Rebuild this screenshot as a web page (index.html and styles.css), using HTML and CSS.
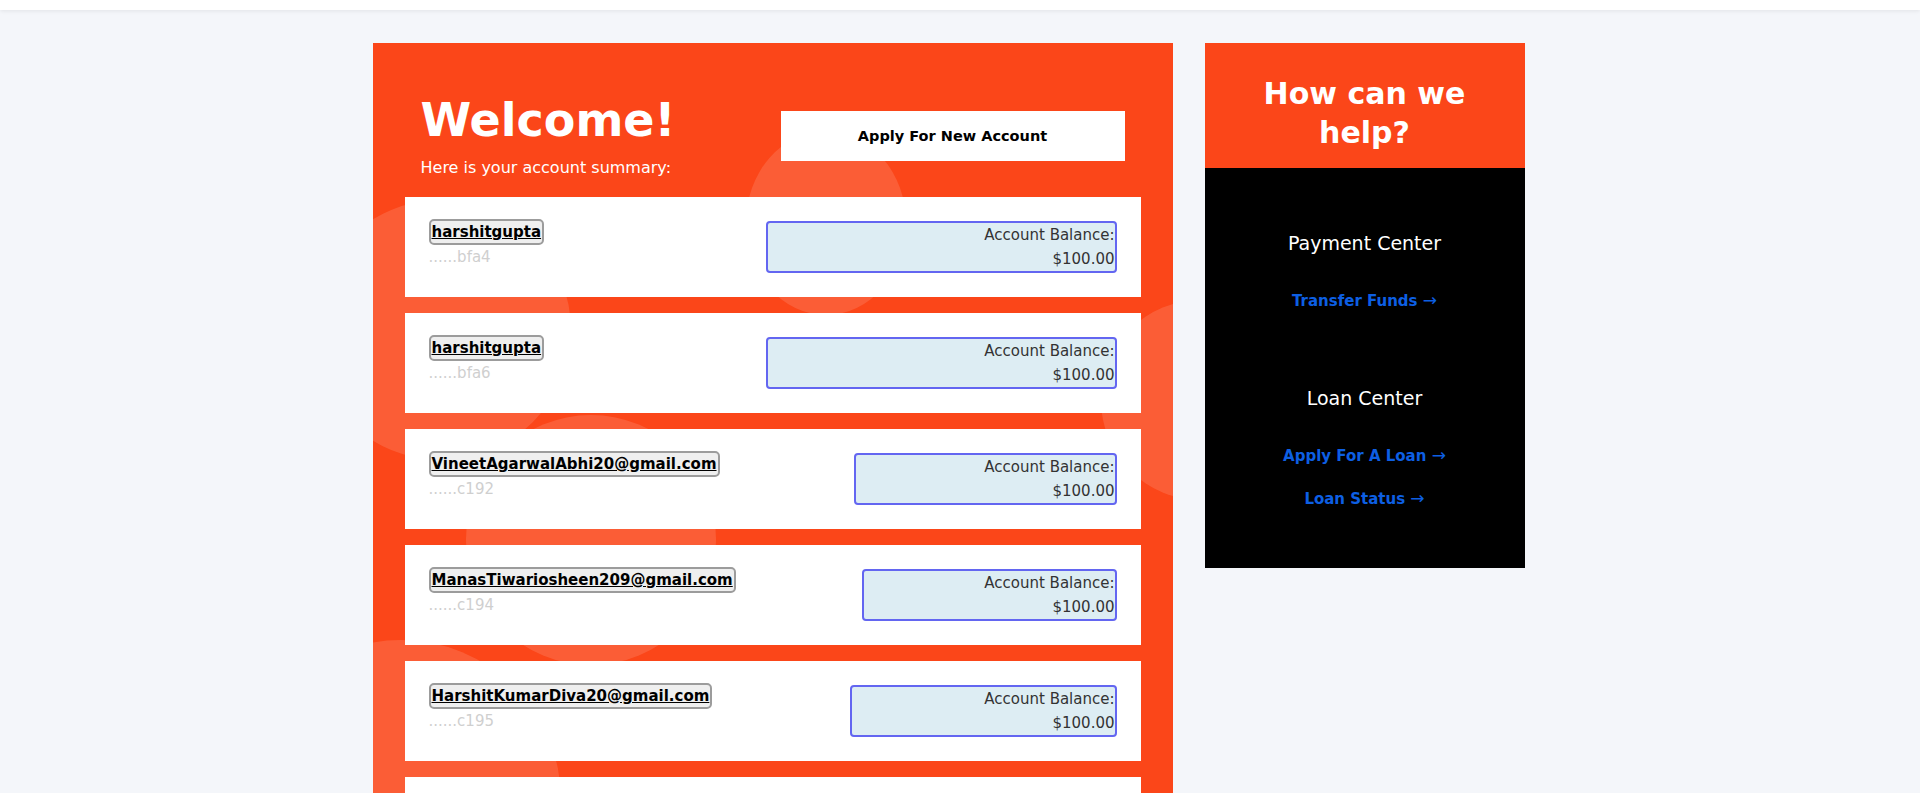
FILE: index.html
```html
<!DOCTYPE html>
<html>
<head>
    <meta charset="UTF-8">
    <meta name="viewport" content="width=device-width, initial-scale=1.0">
    <title>Dashboard</title>
    <link rel="stylesheet" href="styles.css">
</head>
<body>
    <header class="topbar"></header>

    <main class="page">
        <section class="summary">
            <svg class="blobs" width="800" height="1900" viewBox="0 0 800 1900">
                <ellipse cx="453" cy="180" rx="80" ry="92" />
                <circle cx="68" cy="287" r="130" />
                <circle cx="218" cy="497" r="125" />
                <circle cx="28" cy="757" r="160" />
                <circle cx="828" cy="357" r="100" />
                <circle cx="560" cy="1100" r="150" />
                <circle cx="90" cy="1450" r="170" />
            </svg>

            <div class="summary-head">
                <div>
                    <h1>Welcome!</h1>
                    <p>Here is your account summary:</p>
                </div>
                <button class="new-account">Apply For New Account</button>
            </div>

            <div class="accounts">
                <div class="account">
                    <div class="account-info">
                        <a class="user-chip" href="#">harshitgupta</a>
                        <div class="account-id">......bfa4</div>
                    </div>
                    <div class="balance">Account Balance:<br>$100.00</div>
                </div>
                <div class="account">
                    <div class="account-info">
                        <a class="user-chip" href="#">harshitgupta</a>
                        <div class="account-id">......bfa6</div>
                    </div>
                    <div class="balance">Account Balance:<br>$100.00</div>
                </div>
                <div class="account">
                    <div class="account-info">
                        <a class="user-chip" href="#">VineetAgarwalAbhi20@gmail.com</a>
                        <div class="account-id">......c192</div>
                    </div>
                    <div class="balance">Account Balance:<br>$100.00</div>
                </div>
                <div class="account">
                    <div class="account-info">
                        <a class="user-chip" href="#">ManasTiwariosheen209@gmail.com</a>
                        <div class="account-id">......c194</div>
                    </div>
                    <div class="balance">Account Balance:<br>$100.00</div>
                </div>
                <div class="account">
                    <div class="account-info">
                        <a class="user-chip" href="#">HarshitKumarDiva20@gmail.com</a>
                        <div class="account-id">......c195</div>
                    </div>
                    <div class="balance">Account Balance:<br>$100.00</div>
                </div>
                <div class="account">
                    <div class="account-info">
                        <a class="user-chip" href="#">harshitgupta</a>
                        <div class="account-id">......c19a</div>
                    </div>
                    <div class="balance">Account Balance:<br>$100.00</div>
                </div>
                <div class="account">
                    <div class="account-info">
                        <a class="user-chip" href="#">harshitgupta</a>
                        <div class="account-id">......c1a0</div>
                    </div>
                    <div class="balance">Account Balance:<br>$100.00</div>
                </div>
                <div class="account">
                    <div class="account-info">
                        <a class="user-chip" href="#">harshitgupta</a>
                        <div class="account-id">......c1a3</div>
                    </div>
                    <div class="balance">Account Balance:<br>$100.00</div>
                </div>
                <div class="account">
                    <div class="account-info">
                        <a class="user-chip" href="#">harshitgupta</a>
                        <div class="account-id">......c1a7</div>
                    </div>
                    <div class="balance">Account Balance:<br>$100.00</div>
                </div>
                <div class="account">
                    <div class="account-info">
                        <a class="user-chip" href="#">harshitgupta</a>
                        <div class="account-id">......c1b2</div>
                    </div>
                    <div class="balance">Account Balance:<br>$100.00</div>
                </div>
                <div class="account">
                    <div class="account-info">
                        <a class="user-chip" href="#">harshitgupta</a>
                        <div class="account-id">......c1b5</div>
                    </div>
                    <div class="balance">Account Balance:<br>$100.00</div>
                </div>
                <div class="account">
                    <div class="account-info">
                        <a class="user-chip" href="#">harshitgupta</a>
                        <div class="account-id">......c1b9</div>
                    </div>
                    <div class="balance">Account Balance:<br>$100.00</div>
                </div>
            </div>
        </section>

        <aside class="help">
            <h2 class="help-title">How can we help?</h2>
            <div class="help-body">
                <div class="help-group">
                    <h3>Payment Center</h3>
                    <a href="#">Transfer Funds <span class="arrow">&rarr;</span></a>
                </div>
                <div class="help-group">
                    <h3>Loan Center</h3>
                    <a href="#">Apply For A Loan <span class="arrow">&rarr;</span></a>
                    <a href="#">Loan Status <span class="arrow">&rarr;</span></a>
                </div>
            </div>
        </aside>
    </main>
</body>
</html>
```

FILE: styles.css
```css
body {
    margin: 0;
    padding-right: 23px;
    background: #f4f6fa;
    font-family: "DejaVu Sans", "Noto Sans", sans-serif;
    color: #333;
}

.topbar {
    height: 10px;
    margin-right: -23px;
    background: #ffffff;
    box-shadow: 0 1px 4px rgba(0,0,0,0.08);
}

.page {
    max-width: 1152px;
    margin: 33px auto 40px;
    display: flex;
    gap: 32px;
    align-items: flex-start;
}

/* account summary card */
.summary {
    width: 800px;
    flex: none;
    box-sizing: border-box;
    padding: 32px;
    background: #fb4619;
    position: relative;
    overflow: hidden;
}

.blobs {
    position: absolute;
    top: 0;
    left: 0;
    fill: rgba(255,255,255,0.13);
}

.summary-head {
    position: relative;
    display: flex;
    justify-content: space-between;
    align-items: center;
    padding: 17px 16px;
}

.summary-head h1 {
    margin: 0;
    font-size: 46px;
    line-height: 56px;
    font-weight: bold;
    color: #fff;
}

.summary-head p {
    margin: 8px 0 0;
    font-size: 16px;
    line-height: 24px;
    color: #fff;
}

.new-account {
    width: 344px;
    height: 50px;
    border: none;
    background: #fff;
    color: #000;
    font-family: inherit;
    font-size: 14.5px;
    font-weight: bold;
    cursor: pointer;
}

.accounts {
    position: relative;
    display: flex;
    flex-direction: column;
    gap: 16px;
}

.account {
    display: flex;
    align-items: flex-start;
    gap: 6px;
    padding: 24px;
    background: #fff;
}

.account-info {
    flex: 1 1 auto;
    margin-top: -2px;
}

.user-chip {
    display: inline-block;
    padding: 0 1px;
    border: 2px solid #9c9c9c;
    border-radius: 5px;
    background: #efefef;
    color: #000;
    font-size: 15px;
    line-height: 22px;
    font-weight: bold;
    text-decoration: underline;
}

.account-id {
    font-size: 15px;
    line-height: 24px;
    color: #cfcfcf;
}

.balance {
    flex: 1 1 auto;
    border: 2px solid #6366f1;
    border-radius: 4px;
    background: #ddedf3;
    text-align: right;
    font-size: 15px;
    line-height: 24px;
    color: #333;
}

/* help sidebar */
.help {
    width: 320px;
    flex: none;
    background: #000;
    text-align: center;
}

.help-title {
    margin: 0;
    padding: 32px 40px 16px;
    background: #fb4619;
    color: #fff;
    font-size: 30px;
    line-height: 38.5px;
    font-weight: bold;
}

.help-body {
    display: flex;
    flex-direction: column;
    gap: 71px;
    padding: 61px 16px 57px;
}

.help-group {
    display: flex;
    flex-direction: column;
    gap: 19px;
}

.help-group h3 {
    margin: 0 0 13px;
    font-size: 19px;
    line-height: 28px;
    font-weight: normal;
    color: #fff;
}

.help-group a {
    font-size: 15px;
    line-height: 24px;
    font-weight: bold;
    color: #0d5fe3;
    text-decoration: none;
}

.arrow {
    font-size: 17px;
    line-height: 1;
    font-weight: normal;
}
```
